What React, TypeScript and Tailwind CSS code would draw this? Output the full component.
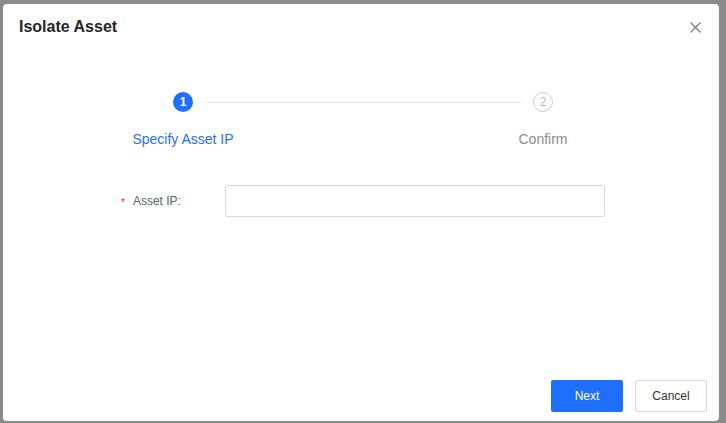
import React, { useState } from "react";

const font = { fontFamily: '"Liberation Sans", Arial, sans-serif' };

const App = () => {
  const [assetIp, setAssetIp] = useState<string>("");

  return (
    <div
      className="w-[726px] h-[423px] bg-[#8b8b8b] pt-[4px] pl-[3px] overflow-hidden"
      style={font}
    >
      <div className="w-[716px] h-[417px] bg-white rounded-[4px] flex flex-col">
        {/* header */}
        <div className="h-[46px] flex items-center justify-between pl-4 pr-[18px]">
          <span className="text-[16px] leading-6 font-bold text-[#262626]">Isolate Asset</span>
          <button className="w-[12px] h-[12px] flex items-center justify-center">
            <svg width="11" height="11" viewBox="0 0 11 11">
              <path d="M0.5 0.5 L10.5 10.5 M10.5 0.5 L0.5 10.5" stroke="#7a7a7a" strokeWidth="1.3" />
            </svg>
          </button>
        </div>

        {/* steps */}
        <div className="mt-[42px] ml-[170px] w-[380px]">
          <div className="flex items-center">
            <div className="w-5 h-5 rounded-full bg-[#1f6fff] text-white text-[12px] font-bold flex items-center justify-center">
              1
            </div>
            <div className="flex-1 h-px bg-[#e8e8ec] mx-3" />
            <div className="w-5 h-5 rounded-full border border-[#cfcfcf] text-[#bdbdbd] text-[12px] flex items-center justify-center">
              2
            </div>
          </div>
          <div className="flex justify-between mt-[17px]">
            <div className="w-5 flex justify-center">
              <span className="whitespace-nowrap text-[14px] leading-5 text-[#1f6fff]">Specify Asset IP</span>
            </div>
            <div className="w-5 flex justify-center">
              <span className="whitespace-nowrap text-[14px] leading-5 text-[#8c8c8c]">Confirm</span>
            </div>
          </div>
        </div>

        {/* form */}
        <div className="mt-[36px] ml-[118px] flex items-center">
          <label className="w-[104px] flex items-center text-[12px] text-[#606266]">
            <span className="text-[#f5222d] text-[10px] leading-none mr-[8px] mt-[3px]">*</span>
            Asset IP:
          </label>
          <input
            className="w-[380px] h-8 border border-[#d6d9de] rounded-[2px] px-3 text-[12px] outline-none"
            type="text"
            value={assetIp}
            onChange={(e) => setAssetIp(e.target.value)}
          />
        </div>

        {/* footer */}
        <div className="mt-auto flex justify-end gap-3 pr-3 pb-[9px]">
          <button className="w-[72px] h-8 bg-[#1f6fff] rounded-[2px] text-white text-[12px]">Next</button>
          <button className="w-[72px] h-8 border border-[#d6d9de] rounded-[2px] text-[#333] text-[12px] bg-white">
            Cancel
          </button>
        </div>
      </div>
    </div>
  );
};

export default App;
